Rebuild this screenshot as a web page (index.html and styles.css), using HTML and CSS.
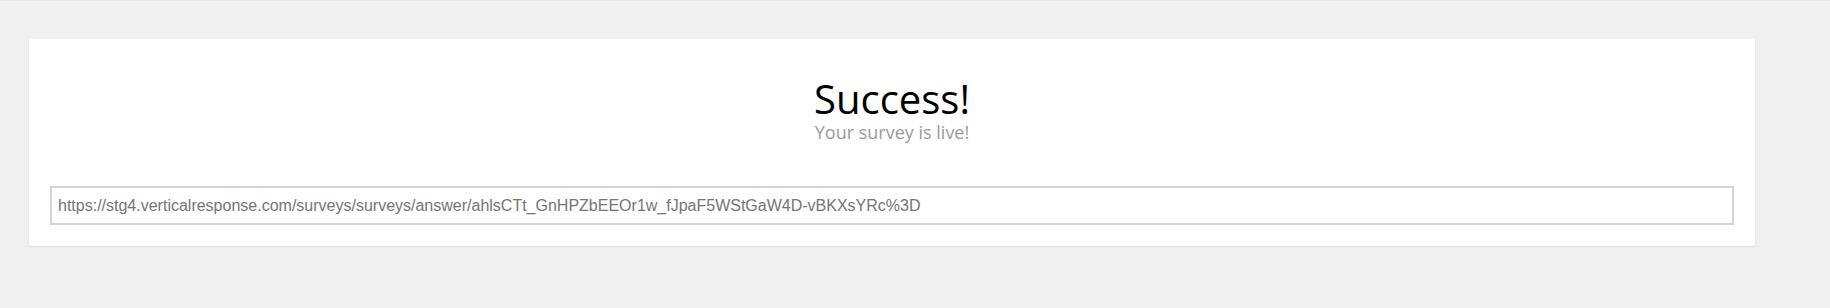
FILE: index.html
```html
<!DOCTYPE html>
<html lang="en">
<head>
<meta charset="utf-8">
<title>Success</title>
<link rel="stylesheet" href="styles.css">
</head>
<body>
<main class="page">
  <section class="card">
    <header class="card-header">
      <h1 class="title">Success!</h1>
      <p class="subtitle">Your survey is live!</p>
    </header>
    <input class="link-field" type="text" readonly value="https://stg4.verticalresponse.com/surveys/surveys/answer/ahlsCTt_GnHPZbEEOr1w_fJpaF5WStGaW4D-vBKXsYRc%3D">
  </section>
</main>
</body>
</html>
```

FILE: styles.css
```css
html, body {
  margin: 0;
  padding: 0;
}
body {
  background: #f0f0f0;
  border-top: 1px solid #e6e6e6;
  height: 307px;
  font-family: "Open Sans", "Liberation Sans", sans-serif;
}
.page {
  padding: 38px 75px 0 29px;
}
.card {
  background: #ffffff;
  border-radius: 2px;
  box-shadow: 0 1px 2px rgba(0, 0, 0, 0.09);
  padding: 21px;
  display: flex;
  flex-direction: column;
}
.card-header {
  padding-top: 17px;
  margin-bottom: 44px;
  text-align: center;
}
.title {
  margin: 0;
  font-family: "Open Sans", sans-serif;
  font-weight: 400;
  font-size: 40px;
  line-height: 44px;
  color: #000;
}
.subtitle {
  margin: 1px 0 0;
  font-family: "Open Sans", sans-serif;
  font-size: 18px;
  line-height: 20px;
  color: #9a9a9a;
}
.link-field {
  display: block;
  box-sizing: border-box;
  width: 100%;
  height: 39px;
  margin: 0;
  border: 2px solid #d2d2d2;
  border-radius: 0;
  padding: 0 6px;
  font-family: "Liberation Sans", Arial, sans-serif;
  font-size: 16px;
  color: #757575;
  background: #fff;
  outline: none;
}
```
